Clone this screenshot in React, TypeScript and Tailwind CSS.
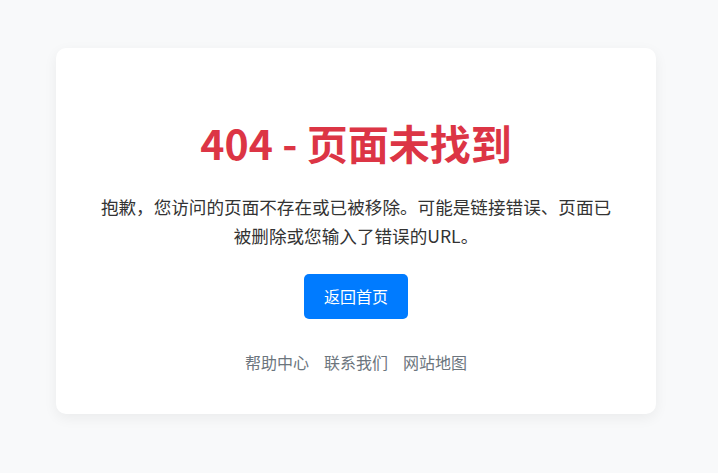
export default function App() {
  const links = ["帮助中心", "联系我们", "网站地图"];
  return (
    <div
      className="min-h-[473px] bg-[#f8f9fa] pt-[48px] pl-[56px]"
      style={{ fontFamily: '"Noto Sans CJK SC", "Noto Sans", sans-serif' }}
    >
      <div className="w-[600px] h-[366px] bg-white rounded-[10px] shadow-[0_4px_14px_rgba(0,0,0,0.06)] px-[40px] pt-[72px] flex flex-col items-center text-center">
        <h1 className="text-[41px] leading-[44px] font-bold text-[#dc3545]">404 - 页面未找到</h1>
        <p className="mt-[28px] text-[17.6px] leading-[29px] text-[#333333]">
          抱歉，您访问的页面不存在或已被移除。可能是链接错误、页面已被删除或您输入了错误的URL。
        </p>
        <button className="mt-[24px] w-[104px] h-[45px] rounded-[5px] bg-[#007bff] text-white text-[16px] leading-[21px]">
          返回首页
        </button>
        <div className="mt-[31px] flex gap-[15px] text-[16px] leading-[24px] text-[#6c757d]">
          {links.map((l) => (
            <a key={l} href="#">
              {l}
            </a>
          ))}
        </div>
      </div>
    </div>
  );
}
